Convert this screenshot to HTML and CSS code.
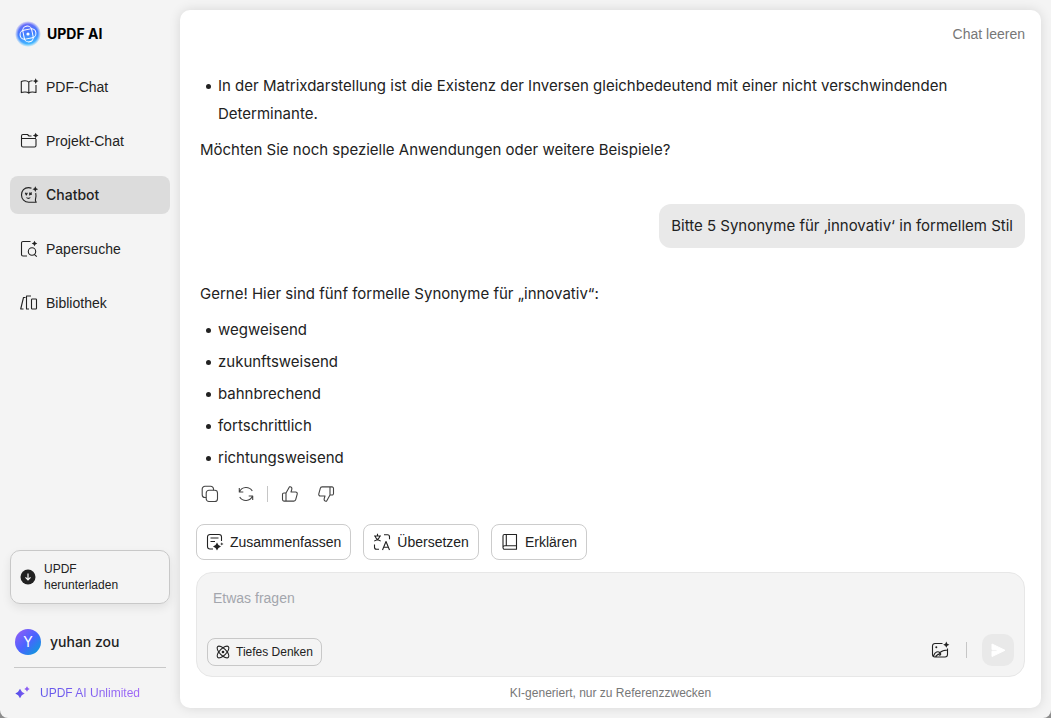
FILE: index.html
```
<!DOCTYPE html>
<html lang="de">
<head>
<meta charset="utf-8">
<meta name="viewport" content="width=device-width, initial-scale=1">
<title>UPDF AI</title>
<link rel="stylesheet" href="styles.css">
</head>
<body>
<div class="app">
  <aside class="sidebar">
    <div class="brand">
      <svg class="brand-logo" viewBox="0 0 26 26" fill="none">
        <defs>
          <radialGradient id="glow" cx=".5" cy=".5" r=".5"><stop offset=".75" stop-color="#fff"/><stop offset="1" stop-color="#fff" stop-opacity="0"/></radialGradient>
          <linearGradient id="sky" x1=".4" y1="0" x2=".6" y2="1"><stop offset="0" stop-color="#7467f5"/><stop offset=".45" stop-color="#447bff"/><stop offset="1" stop-color="#42c8ff"/></linearGradient>
          <mask id="soft"><circle cx="13" cy="13" r="13" fill="url(#glow)"/></mask>
        </defs>
        <circle cx="13" cy="13" r="13" fill="url(#sky)" mask="url(#soft)"/>
        <g stroke="#fff" stroke-width="1">
          <rect x="8.500" y="5" width="9" height="16" rx="4.500" transform="rotate(-12 13 13)"/>
          <rect x="5" y="8.500" width="16" height="9" rx="4.500" transform="rotate(-12 13 13)"/>
        </g>
        <circle cx="13" cy="13" r="1.600" fill="#fff"/>
      </svg>
      <span class="brand-name">UPDF AI</span>
    </div>
    <nav class="nav">
      <a class="nav-item" href="#">
        <svg class="icon" viewBox="0 0 18 18"><path d="M12.500 2.800c-1.700 0-3 .3-3.700 1.300C8 3.100 6.500 2.700 5 2.700c-1.600 0-2.700.2-3.700.7v11.200c1-.5 2.200-.6 3.700-.6s3 .3 3.800 1.200c.8-.9 2.200-1.200 3.700-1.200 1.300 0 2.500.1 3.500.5V7M8.800 4.200v11"/><path class="fill" d="M15.700.3l.9 1.900 1.900.9-1.900.9-.9 1.900-.9-1.900-1.900-.9 1.900-.9z"/></svg>
        PDF-Chat</a>
      <a class="nav-item" href="#">
        <svg class="icon" viewBox="0 0 18 18"><path d="M11.500 4H9L7.500 2.500H3A1.500 1.500 0 0 0 1.500 4v9.500A1.500 1.500 0 0 0 3 15h11.500a1.500 1.500 0 0 0 1.500-1.500V7M1.500 6.500H16"/><path class="fill" d="M15.700.7l.9 1.900 1.900.9-1.900.9-.9 1.900-.9-1.900-1.900-.9 1.900-.9z"/></svg>
        Projekt-Chat</a>
      <a class="nav-item active" href="#" aria-current="page">
        <svg class="icon" viewBox="0 0 18 18"><path d="M11.500 2.300C10.500 1.800 9.600 1.600 8.500 1.600 4.300 1.600 1.500 4.800 1.500 9s3 7.200 7.300 7.200h7.400c-.4-.9-1-1.500-.8-2.400.5-1.700.9-4.600.3-6.800M5.300 6.800l1 2.200 1-2.200M9.700 6.500v2.500l1.500-2.300v2.300M6.500 11.500c1 1.100 2.800 1.100 3.800 0"/><path class="fill" d="M15.300.3l.9 2 2 .9-2 .9-.9 2-.9-2-2-.9 2-.9z"/></svg>
        Chatbot</a>
      <a class="nav-item" href="#">
        <svg class="icon" viewBox="0 0 18 18"><path d="M10.500 1.500H3A1.500 1.500 0 0 0 1.500 3v11.500A1.500 1.500 0 0 0 3 16h4M14.200 14.300l2.600 2.300"/><circle cx="12" cy="11.500" r="3.700"/><path class="fill" d="M14.500.7l.9 1.900 1.900.9-1.900.9-.9 1.900-.9-1.900-1.900-.9 1.900-.9z"/></svg>
        Papersuche</a>
      <a class="nav-item" href="#">
        <svg class="icon" viewBox="0 0 18 18"><path d="M5.500 3.500H3.500L.7 15h2.800M11 2H6.500v13H9"/><rect x="11.500" y="5" width="5" height="10" rx=".7"/></svg>
        Bibliothek</a>
    </nav>
    <div class="sidebar-foot">
      <button class="download" type="button">
        <svg class="download-icon" viewBox="0 0 16 16"><circle cx="8" cy="8" r="7.500" fill="#222"/><path d="M8 4.500v6M5.500 8.300L8 10.800l2.500-2.500" fill="none" stroke="#fff" stroke-width="1.200"/></svg>
        <span>UPDF<br>herunterladen</span>
      </button>
      <div class="user"><span class="avatar">Y</span><span>yuhan zou</span></div>
      <a class="plan" href="#">
        <svg class="plan-icon" viewBox="0 0 16 16"><defs><linearGradient id="star"><stop offset="0" stop-color="#4b4be8"/><stop offset="1" stop-color="#9b63f5"/></linearGradient></defs><path fill="url(#star)" d="M5 3.800Q6.300 7.200 9.700 8.500 6.300 9.800 5 13.200 3.700 9.800.3 8.500 3.700 7.200 5 3.800zM12 1.300Q12.700 3.300 14.700 4 12.700 4.700 12 6.700 11.300 4.700 9.300 4 11.300 3.300 12 1.300z"/></svg>
        <span class="plan-name">UPDF AI Unlimited</span>
      </a>
    </div>
  </aside>

  <main class="panel">
    <header class="panel-head"><button class="clear" type="button">Chat leeren</button></header>
    <section class="thread">
      <div class="message">
        <ul><li>In der Matrixdarstellung ist die Existenz der Inversen gleichbedeutend mit einer nicht verschwindenden Determinante.</li></ul>
        <p>Möchten Sie noch spezielle Anwendungen oder weitere Beispiele?</p>
      </div>
      <p class="bubble">Bitte 5 Synonyme für ‚innovativ‘ in formellem Stil</p>
      <div class="message">
        <p>Gerne! Hier sind fünf formelle Synonyme für „innovativ“:</p>
        <ul>
          <li>wegweisend</li>
          <li>zukunftsweisend</li>
          <li>bahnbrechend</li>
          <li>fortschrittlich</li>
          <li>richtungsweisend</li>
        </ul>
      </div>
      <div class="actions">
        <button type="button" aria-label="Kopieren"><svg class="icon" viewBox="0 0 18 18"><path d="M5.200 12.500H4A2.800 2.800 0 0 1 1.200 9.700V4A2.800 2.800 0 0 1 4 1.200h5.700A2.800 2.800 0 0 1 12.500 4v1.200"/><rect x="5.200" y="5.200" width="11.300" height="11.300" rx="2.800"/></svg></button>
        <button type="button" aria-label="Neu generieren"><svg class="icon" viewBox="0 0 18 18"><path d="M2.300 3v4h4M2.500 6.700C5 1.500 12 1 15.300 6M15.700 15v-4h-4M15.500 11.300C13 16.500 6 17 2.700 12"/></svg></button>
        <span class="divider"></span>
        <button type="button" aria-label="Gefällt mir"><svg class="icon" viewBox="0 0 18 18"><path d="M5 8L8.500 1.800c1.700-.4 2.700.9 2.300 2.500L10 7h4.600c1.200 0 1.900 1 1.600 2.100l-1.500 5.600c-.2.900-.9 1.400-1.800 1.400H3A1.500 1.500 0 0 1 1.500 14.600v-5A1.500 1.500 0 0 1 3 8h2zM5 8v8"/></svg></button>
        <button type="button" aria-label="Gefällt mir nicht"><svg class="icon" viewBox="0 0 18 18"><path d="M13 10l-3.500 6.200c-1.700.4-2.700-.9-2.300-2.500L8 11H3.400c-1.200 0-1.900-1-1.600-2.100l1.500-5.600c.2-.9.900-1.400 1.800-1.400H15A1.500 1.500 0 0 1 16.500 3.400v5A1.500 1.500 0 0 1 15 10h-2zM13 10V2"/></svg></button>
      </div>
    </section>
    <div class="chips">
      <button type="button"><svg class="icon" viewBox="0 0 18 18"><path d="M7 16H4a2.500 2.500 0 0 1-2.500-2.500V4A2.500 2.500 0 0 1 4 1.500h9A2.500 2.500 0 0 1 15.500 4v4M4.500 5h8M4.500 8.500h4.500"/><path class="fill" d="M11 9.500Q11.900 12.600 15 13.500 11.900 14.400 11 17.500 10.100 14.400 7 13.500 10.100 12.600 11 9.500zM15.800 9.200l.5 1.200 1.200.5-1.200.5-.5 1.200-.5-1.200-1.200-.5 1.200-.5z"/></svg>Zusammenfassen</button>
      <button type="button"><svg class="icon" viewBox="0 0 18 18"><path d="M4.500.7v2M1 3h7M2.200 3c.5 2.500 2.800 4.300 5.500 5M6.800 3C6.300 5.500 4 7.300 1.200 8M11 1.700h3.500a2 2 0 0 1 2 2v2.500M1.500 11.500v2.800a2 2 0 0 0 2 2H6M9.500 17l3.500-8.500 3.500 8.500M10.700 14.300h4.600"/></svg>Übersetzen</button>
      <button type="button"><svg class="icon" viewBox="0 0 18 18"><path d="M15.500 12.800V1.500H3.500A1.500 1.500 0 0 0 2 3v11.500A1.700 1.700 0 0 0 3.700 16.300H15.500v-3.500H3.700A1.700 1.700 0 0 0 2 14.500M5.300 1.500v11.300"/></svg>Erklären</button>
    </div>
    <div class="composer">
      <textarea placeholder="Etwas fragen" aria-label="Etwas fragen" rows="1"></textarea>
      <div class="tools">
        <button class="deep" type="button"><svg viewBox="0 0 14 14"><ellipse cx="7" cy="7" rx="7.600" ry="3.300" transform="rotate(45 7 7)"/><ellipse cx="7" cy="7" rx="7.600" ry="3.300" transform="rotate(-45 7 7)"/><circle class="fill" cx="7" cy="7" r="1.300"/></svg>Tiefes Denken</button>
        <button class="image" type="button" aria-label="Bild hinzufügen"><svg class="icon" viewBox="0 0 18 18"><path d="M11.500 2.500H4A2.500 2.500 0 0 0 1.500 5v8.500A2.500 2.500 0 0 0 4 16h10a2.500 2.500 0 0 0 2.500-2.500V7.500M2.500 15C4 10.500 7 10 9 11.700c1.300 1.200.7 2.800-.7 2.300-1-.5.500-4.700 8.200-5M4.500 15.500l3-2.500"/><circle class="fill" cx="5.300" cy="6.200" r="1"/><path class="fill" d="M15.300.6l1 2.100 2.100 1-2.100 1-1 2.100-1-2.100-2.100-1 2.100-1z"/></svg></button>
        <span class="divider"></span>
        <button class="send" type="button" aria-label="Senden"><svg viewBox="0 0 16 16"><path d="M2 2L15 8.300 2 14.500V9.200h5V7.600H2z" fill="#fff" stroke="#fff" stroke-linejoin="round"/></svg></button>
      </div>
    </div>
    <p class="note">KI-generiert, nur zu Referenzzwecken</p>
  </main>
</div>
</body>
</html>
```
FILE: styles.css
```
* { box-sizing: border-box; }
html { background: #8c8c8c; }
body {
  margin: 0;
  font-family: "Liberation Sans", Arial, sans-serif;
  font-size: 14px;
  line-height: 20px;
  color: #222;
}
button, textarea { font: inherit; color: inherit; background: none; border: 0; padding: 0; margin: 0; }
button { cursor: pointer; }
a { color: inherit; text-decoration: none; }
p, ul { margin: 0; }
svg { flex: none; display: block; }

.app {
  display: flex;
  min-height: 100vh;
  background: #f4f4f4;
  border-radius: 0 0 8px 8px;
}
.icon { width: 18px; height: 18px; overflow: visible; fill: none; stroke: #222; stroke-width: 1.1; stroke-linejoin: round; }
.fill { fill: #222; stroke: none; }
.divider { width: 1px; height: 16px; background: #c6c6c6; }

.sidebar { width: 180px; flex: none; display: flex; flex-direction: column; padding: 21px 10px 15px; }
.brand { display: flex; align-items: center; gap: 6px; height: 26px; padding-left: 5px; }
.brand-logo { width: 26px; height: 26px; }
.brand-name { font-family: Inter, sans-serif; font-weight: 700; color: #000; }
.nav { display: flex; flex-direction: column; gap: 16px; margin-top: 21px; }
.nav-item { display: flex; align-items: center; gap: 8px; height: 38px; padding: 0 10px; border-radius: 8px; }
.nav-item.active { background: #dcdcdc; }
.nav-item.active, .user { font-family: Inter, sans-serif; font-weight: 500; }

.sidebar-foot { margin-top: auto; display: flex; flex-direction: column; }
.download {
  display: flex; align-items: center; gap: 8px;
  padding: 10px 9px; border: 1px solid #c8c8c8; border-radius: 10px;
  font-size: 12px; line-height: 16px; text-align: left;
  box-shadow: 0 4px 10px rgba(0, 0, 0, .08);
}
.download-icon { width: 16px; height: 16px; }
.user { display: flex; align-items: center; gap: 9px; margin: 12px 4px 0; padding: 13px 1px 12px; border-bottom: 1px solid #c8c8c8; }
.avatar { display: grid; place-items: center; width: 26px; height: 26px; border-radius: 50%; color: #fff; font-weight: 400; background: linear-gradient(135deg, #9a5cf5, #4a63ff 50%, #00a5d4); }
.plan { display: flex; align-items: center; gap: 9px; margin-top: 15px; padding-left: 5px; font-size: 12px; }
.plan-icon { width: 16px; height: 16px; }
.plan-name { background: linear-gradient(90deg, #6157ea, #a066f7); background-clip: text; -webkit-background-clip: text; color: transparent; }

.panel {
  flex: 1; min-width: 0; display: flex; flex-direction: column;
  margin: 10px 10px 10px 0; padding: 0 16px 5px;
  background: #fff; border-radius: 10px;
  box-shadow: 0 0 12px rgba(0, 0, 0, .12);
}
.panel-head { display: flex; justify-content: flex-end; align-items: center; height: 48px; }
.clear { color: #777; }
.thread { flex: 1; display: flex; flex-direction: column; padding: 14px 0 0 4px; font-family: Inter, sans-serif; font-size: 15px; line-height: 28px; }
.message { display: flex; flex-direction: column; gap: 8px; }
.message ul { display: flex; flex-direction: column; gap: 4px; padding-left: 6px; list-style: none; }
.message li { display: flex; gap: 7px; }
.message li::before { content: ""; flex: none; width: 5px; height: 5px; margin-top: 12px; border-radius: 50%; background: #222; }
.bubble { align-self: flex-end; margin: 40px 0 32px; padding: 8px 12px; border-radius: 12px; background: #e9e9e9; }
.actions { display: flex; align-items: center; gap: 18px; margin-top: 13px; padding-left: 1px; }
.actions .divider { margin: 0 -5px 0 -6px; }
.actions .icon { stroke: #444; }

.chips { display: flex; gap: 12px; margin: 12px 0; }
.chips button {
  display: flex; align-items: center; gap: 6px; height: 36px; padding: 0 9px;
  border: 1px solid #ccc; border-radius: 8px;
}
.composer { padding: 15px 10px 10px; border: 1px solid #e7e7e7; border-radius: 16px; background: #f4f4f4; }
.composer textarea { display: block; width: 100%; height: 46px; padding: 0 6px; resize: none; outline: 0; }
.composer textarea::placeholder { color: #a3a6ad; opacity: 1; }
.tools { display: flex; align-items: center; }
.deep { display: flex; align-items: center; align-self: flex-end; gap: 6px; height: 28px; padding: 0 8px; border: 1px solid #c8c8c8; border-radius: 8px; font-size: 12px; }
.deep svg { width: 14px; height: 14px; overflow: visible; fill: none; stroke: #222; stroke-width: 1.1; }
.deep .fill { fill: #222; }
.image { margin-left: auto; }
.tools .divider { margin: 0 15px 0 17px; }
.send { display: grid; place-items: center; width: 32px; height: 32px; border-radius: 10px; background: #e9e9e9; }
.send svg { width: 16px; height: 16px; }
.note { margin-top: 6px; text-align: center; font-size: 12px; color: #777; }
```
